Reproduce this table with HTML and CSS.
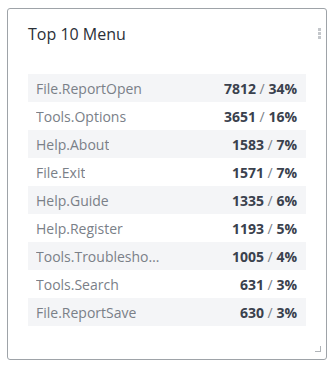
FILE: index.html
```html
<!DOCTYPE html>
<html>
<head>
<meta charset="utf-8">
<link rel="stylesheet" href="styles.css">
</head>
<body>
<div class="card">
  <div class="card-head">
    <h2 class="title">Top 10 Menu</h2>
    <span class="menu-dots"><i></i><i></i><i></i></span>
  </div>
  <ul class="list">
    <li class="row"><span class="label">File.ReportOpen</span><span class="val"><b>7812</b> / <b>34%</b></span></li>
    <li class="row"><span class="label">Tools.Options</span><span class="val"><b>3651</b> / <b>16%</b></span></li>
    <li class="row"><span class="label">Help.About</span><span class="val"><b>1583</b> / <b>7%</b></span></li>
    <li class="row"><span class="label">File.Exit</span><span class="val"><b>1571</b> / <b>7%</b></span></li>
    <li class="row"><span class="label">Help.Guide</span><span class="val"><b>1335</b> / <b>6%</b></span></li>
    <li class="row"><span class="label">Help.Register</span><span class="val"><b>1193</b> / <b>5%</b></span></li>
    <li class="row"><span class="label">Tools.Troubleshooting</span><span class="val"><b>1005</b> / <b>4%</b></span></li>
    <li class="row"><span class="label">Tools.Search</span><span class="val"><b>631</b> / <b>3%</b></span></li>
    <li class="row"><span class="label">File.ReportSave</span><span class="val"><b>630</b> / <b>3%</b></span></li>
  </ul>
  <span class="resize"></span>
</div>
</body>
</html>
```
FILE: styles.css
```css
html, body {
  margin: 0;
  padding: 0;
  background: #ffffff;
}
body {
  font-family: "Open Sans", "Liberation Sans", sans-serif;
}
.card {
  position: relative;
  box-sizing: border-box;
  width: 320px;
  height: 352px;
  margin: 8px 0 0 7px;
  border: 1px solid #9ea3a8;
  border-radius: 3px;
  padding: 14px 20px 0 20px;
}
.card-head {
  display: flex;
  align-items: flex-start;
  justify-content: space-between;
}
.title {
  margin: 0;
  font-size: 16px;
  line-height: 22px;
  font-weight: 400;
  color: #2b3038;
}
.menu-dots {
  display: flex;
  flex-direction: column;
  gap: 1px;
  margin: 5px -15px 0 0;
}
.menu-dots i {
  display: block;
  width: 3px;
  height: 3px;
  background: #c4c7cb;
}
.list {
  list-style: none;
  margin: 29px 0 0 0;
  padding: 0;
}
.row {
  display: flex;
  justify-content: space-between;
  align-items: center;
  height: 28px;
  padding: 0 9px 0 8px;
  font-size: 14px;
  color: #3a414d;
}
.row:nth-child(odd) {
  background: #f4f5f7;
}
.label {
  color: #7a8088;
  white-space: nowrap;
  overflow: hidden;
  text-overflow: ellipsis;
  max-width: 124px;
}
.val {
  color: #7a8088;
  white-space: nowrap;
}
.val b {
  font-weight: 700;
  color: #3a414d;
}
.resize {
  position: absolute;
  right: 5px;
  bottom: 7px;
  width: 5px;
  height: 5px;
  border-right: 1px solid #b0b4b8;
  border-bottom: 1px solid #b0b4b8;
}
```
